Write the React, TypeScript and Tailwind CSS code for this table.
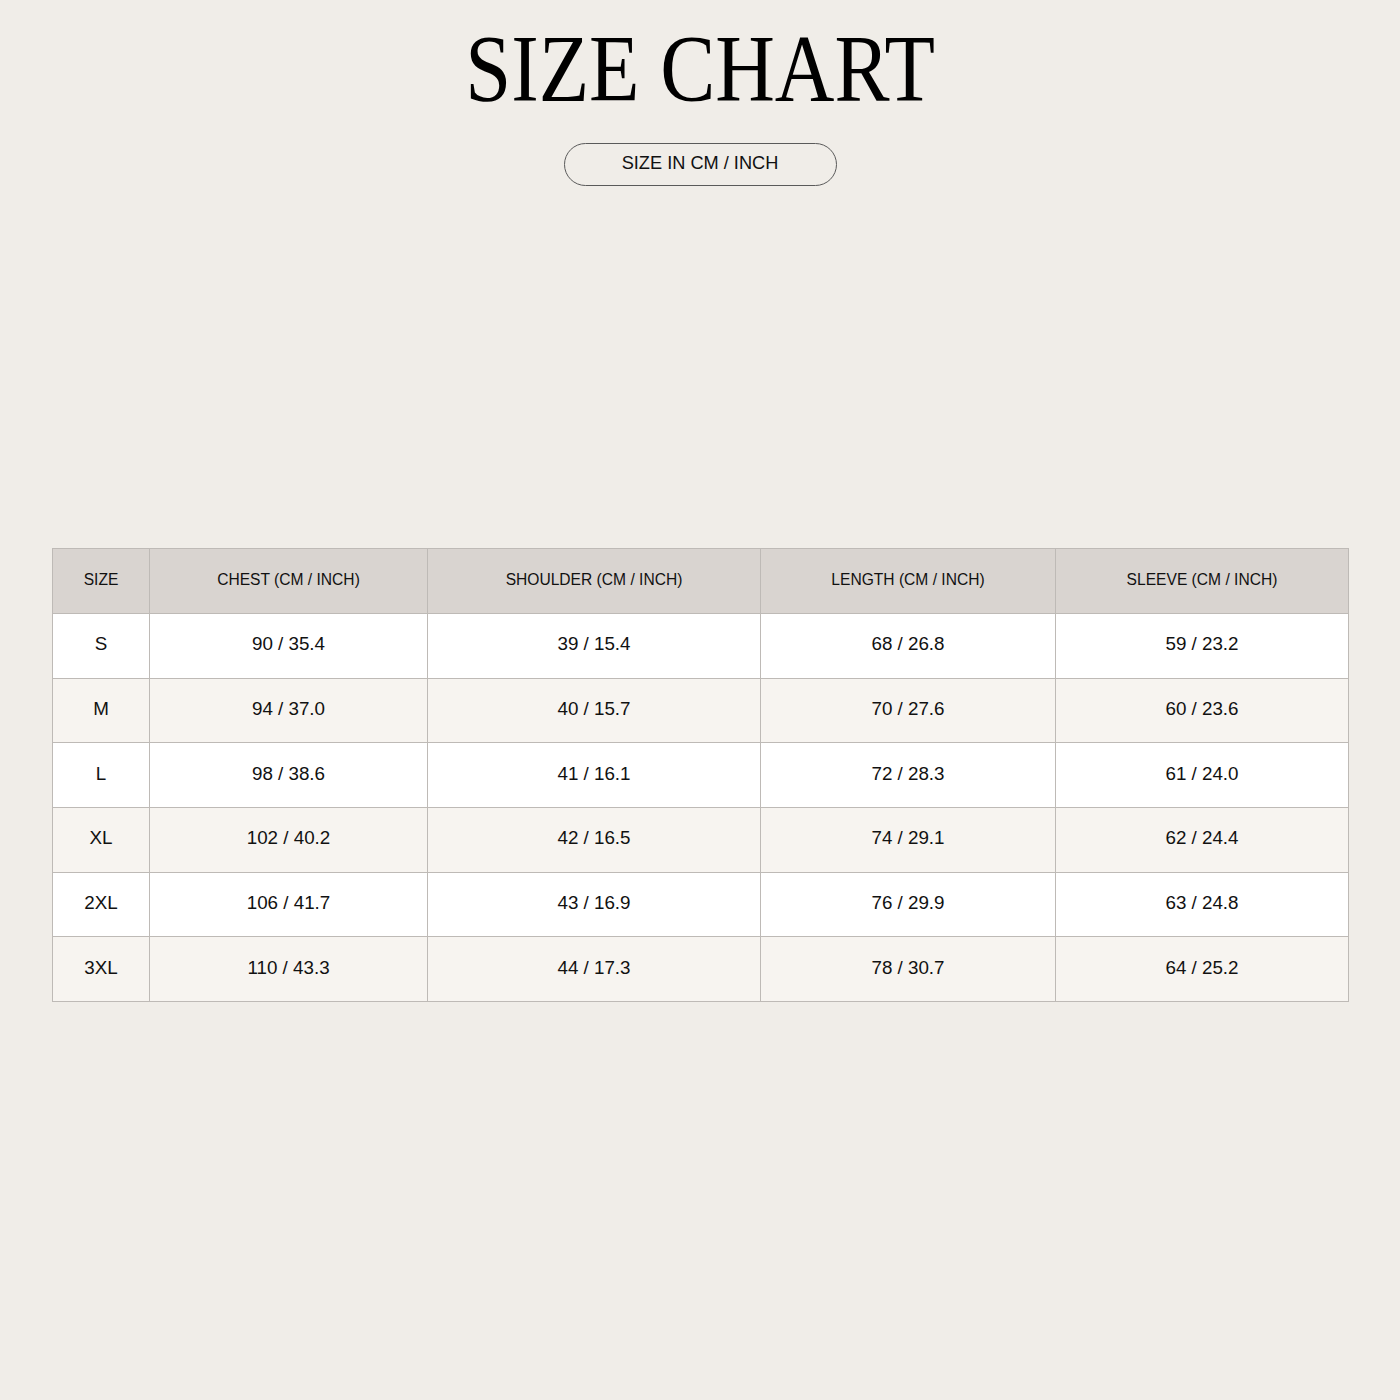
import React from 'react';

const rows: [string, string, string, string, string][] = [
  ['S', '90 / 35.4', '39 / 15.4', '68 / 26.8', '59 / 23.2'],
  ['M', '94 / 37.0', '40 / 15.7', '70 / 27.6', '60 / 23.6'],
  ['L', '98 / 38.6', '41 / 16.1', '72 / 28.3', '61 / 24.0'],
  ['XL', '102 / 40.2', '42 / 16.5', '74 / 29.1', '62 / 24.4'],
  ['2XL', '106 / 41.7', '43 / 16.9', '76 / 29.9', '63 / 24.8'],
  ['3XL', '110 / 43.3', '44 / 17.3', '78 / 30.7', '64 / 25.2'],
];

const headers = ['SIZE', 'CHEST (CM / INCH)', 'SHOULDER (CM / INCH)', 'LENGTH (CM / INCH)', 'SLEEVE (CM / INCH)'];

export default function App(): React.JSX.Element {
  return (
    <div className="min-h-[1400px] w-[1400px] bg-[#f0ede8] font-['Liberation_Sans',Arial,sans-serif] text-[#111]">
      <div className="flex flex-col items-center pt-[21px]">
        <h1 className="h-[96px] origin-center scale-x-[0.86] whitespace-nowrap font-['Liberation_Serif','Times_New_Roman',serif] text-[96px] font-normal leading-[96px] text-black">
          SIZE CHART
        </h1>
        <div className="mt-[26px] flex h-[43px] w-[273px] items-center justify-center rounded-full border border-[#5a5a5a] pb-[1px] text-[18.2px] text-[#111]">
          SIZE IN CM / INCH
        </div>
      </div>

      <div className="mt-[362px] px-[52px]">
        <table className="w-[1296px] table-fixed border-collapse border border-[#bebab6]">
          <colgroup>
            <col className="w-[97px]" />
            <col className="w-[278px]" />
            <col className="w-[333px]" />
            <col className="w-[295px]" />
            <col className="w-[293px]" />
          </colgroup>
          <thead>
            <tr className="h-[65px] bg-[#d9d4d0]">
              {headers.map((h) => (
                <th key={h} className="border border-[#bebab6] p-0 pb-[3px] text-center text-[15.6px] font-normal text-[#111]">
                  {h}
                </th>
              ))}
            </tr>
          </thead>
          <tbody>
            {rows.map((r, i) => (
              <tr key={r[0]} className={i % 2 === 0 ? 'h-[64.7px] bg-white' : 'h-[64.7px] bg-[#f7f4f0]'}>
                {r.map((c, j) => (
                  <td key={j} className="border border-[#bebab6] p-0 pb-[3px] text-center text-[18.8px] text-[#111]">
                    {c}
                  </td>
                ))}
              </tr>
            ))}
          </tbody>
        </table>
      </div>
    </div>
  );
}
